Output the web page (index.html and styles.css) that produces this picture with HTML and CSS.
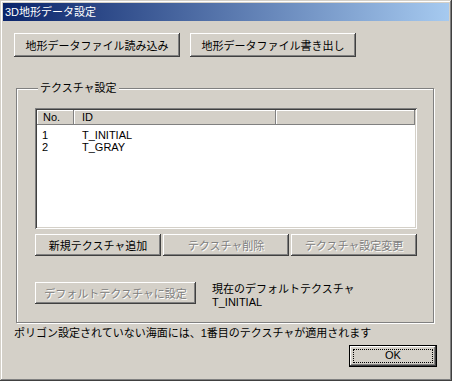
FILE: index.html
```html
<!DOCTYPE html>
<html lang="ja">
<head>
    <meta charset="UTF-8">
    <title>3D地形データ設定</title>
    <link rel="stylesheet" href="styles.css">
</head>
<body>
    <div class="window">
        <div class="titlebar">3D地形データ設定</div>
        <div class="dialog">
            <div class="file-row">
                <button class="btn btn-file">地形データファイル読み込み</button>
                <button class="btn btn-file">地形データファイル書き出し</button>
            </div>

            <div class="group">
                <span class="group-title">テクスチャ設定</span>
                <div class="listview">
                    <div class="lv-header">
                        <div class="lv-col col-no">No.</div>
                        <div class="lv-col col-id">ID</div>
                        <div class="lv-col col-rest"></div>
                    </div>
                    <div class="lv-body">
                        <div class="lv-row"><span class="col-no">1</span><span class="col-id">T_INITIAL</span></div>
                        <div class="lv-row"><span class="col-no">2</span><span class="col-id">T_GRAY</span></div>
                    </div>
                </div>
                <div class="tex-buttons">
                    <button class="btn">新規テクスチャ追加</button>
                    <button class="btn" disabled>テクスチャ削除</button>
                    <button class="btn" disabled>テクスチャ設定変更</button>
                </div>
                <div class="default-row">
                    <button class="btn btn-set-default" disabled>デフォルトテクスチャに設定</button>
                    <div class="default-info">
                        <div>現在のデフォルトテクスチャ</div>
                        <div>T_INITIAL</div>
                    </div>
                </div>
            </div>

            <p class="note">ポリゴン設定されていない海面には、1番目のテクスチャが適用されます</p>
            <div class="footer">
                <button class="btn btn-default"><span class="focus-rect">OK</span></button>
            </div>
        </div>
    </div>
</body>
</html>
```

FILE: styles.css
```css
body {
    margin: 0;
    font-family: "Liberation Sans", "Noto Sans CJK JP", sans-serif;
    font-size: 11px;
    color: #000;
    background: #d4d0c8;
}
.window {
    width: 452px;
    height: 381px;
    box-sizing: border-box;
    padding: 3px;
    background: #d4d0c8;
    box-shadow: inset -1px -1px #404040, inset 1px 1px #d4d0c8,
                inset -2px -2px #808080, inset 2px 2px #fff;
}
.titlebar {
    height: 18px;
    line-height: 18px;
    padding-left: 2px;
    color: #fff;
    background: linear-gradient(to right, #0a246a, #a6caf0);
}
.dialog {
    padding: 12px 12px 0 11px;
}

/* buttons */
.btn {
    font: inherit;
    color: #000;
    background: #d4d0c8;
    border: none;
    padding: 0;
    height: 22px;
    box-shadow: inset -1px -1px #404040, inset 1px 1px #fff,
                inset -2px -2px #808080, inset 2px 2px #d4d0c8;
}
.btn:disabled {
    color: #808080;
    text-shadow: 1px 1px #fff;
}
.file-row {
    display: flex;
    gap: 10px;
}
.btn-file {
    width: 166px;
    height: 24px;
}

/* group box */
.group {
    margin: 31px 0 0 2px;
    width: 418px;
    height: 235px;
    box-sizing: border-box;
    padding: 0 15px 0 18px;
    border: 1px solid #808080;
    box-shadow: 1px 1px #fff, inset 1px 1px #fff;
}
.group-title {
    display: table;
    margin: -7px 0 0 3px;
    padding: 0 2px;
    line-height: 13px;
    background: #d4d0c8;
}

/* list view */
.listview {
    margin-top: 13px;
    width: 382px;
    height: 121px;
    box-sizing: border-box;
    padding: 2px;
    background: #fff;
    box-shadow: inset 1px 1px #808080, inset -1px -1px #fff,
                inset 2px 2px #404040, inset -2px -2px #d4d0c8;
}
.lv-header {
    display: flex;
    height: 15px;
    line-height: 15px;
}
.lv-col {
    box-sizing: border-box;
    background: #d4d0c8;
    box-shadow: inset -1px -1px #808080, inset 1px 1px #fff;
}
.col-no {
    display: inline-block;
    width: 37px;
    box-sizing: border-box;
    padding-left: 6px;
}
.col-id {
    display: inline-block;
    width: 202px;
    box-sizing: border-box;
    padding-left: 8px;
}
.col-rest {
    flex: 1;
}
.lv-body {
    padding-top: 4px;
}
.lv-row {
    line-height: 12px;
    white-space: nowrap;
}
.lv-row .col-no {
    padding-left: 5px;
}

.tex-buttons {
    margin-top: 5px;
    display: grid;
    grid-template-columns: repeat(3, 126px);
    gap: 2px;
}
.default-row {
    margin-top: 26px;
    display: flex;
    align-items: flex-start;
}
.btn-set-default {
    width: 161px;
}
.default-info {
    margin: 1px 0 0 16px;
    line-height: 13px;
}

.note {
    margin: 3px 0 0 0;
    line-height: 14px;
}
.footer {
    display: flex;
    justify-content: flex-end;
    margin-top: 5px;
}
.btn-default {
    width: 88px;
    height: 22px;
    border: 1px solid #000;
    box-sizing: border-box;
    padding: 3px;
    box-shadow: inset -1px -1px #404040, inset 1px 1px #fff,
                inset -2px -2px #808080;
}
.focus-rect {
    display: block;
    height: 100%;
    box-sizing: border-box;
    line-height: 12px;
    outline: 1px dotted #000;
    outline-offset: -1px;
}
```
